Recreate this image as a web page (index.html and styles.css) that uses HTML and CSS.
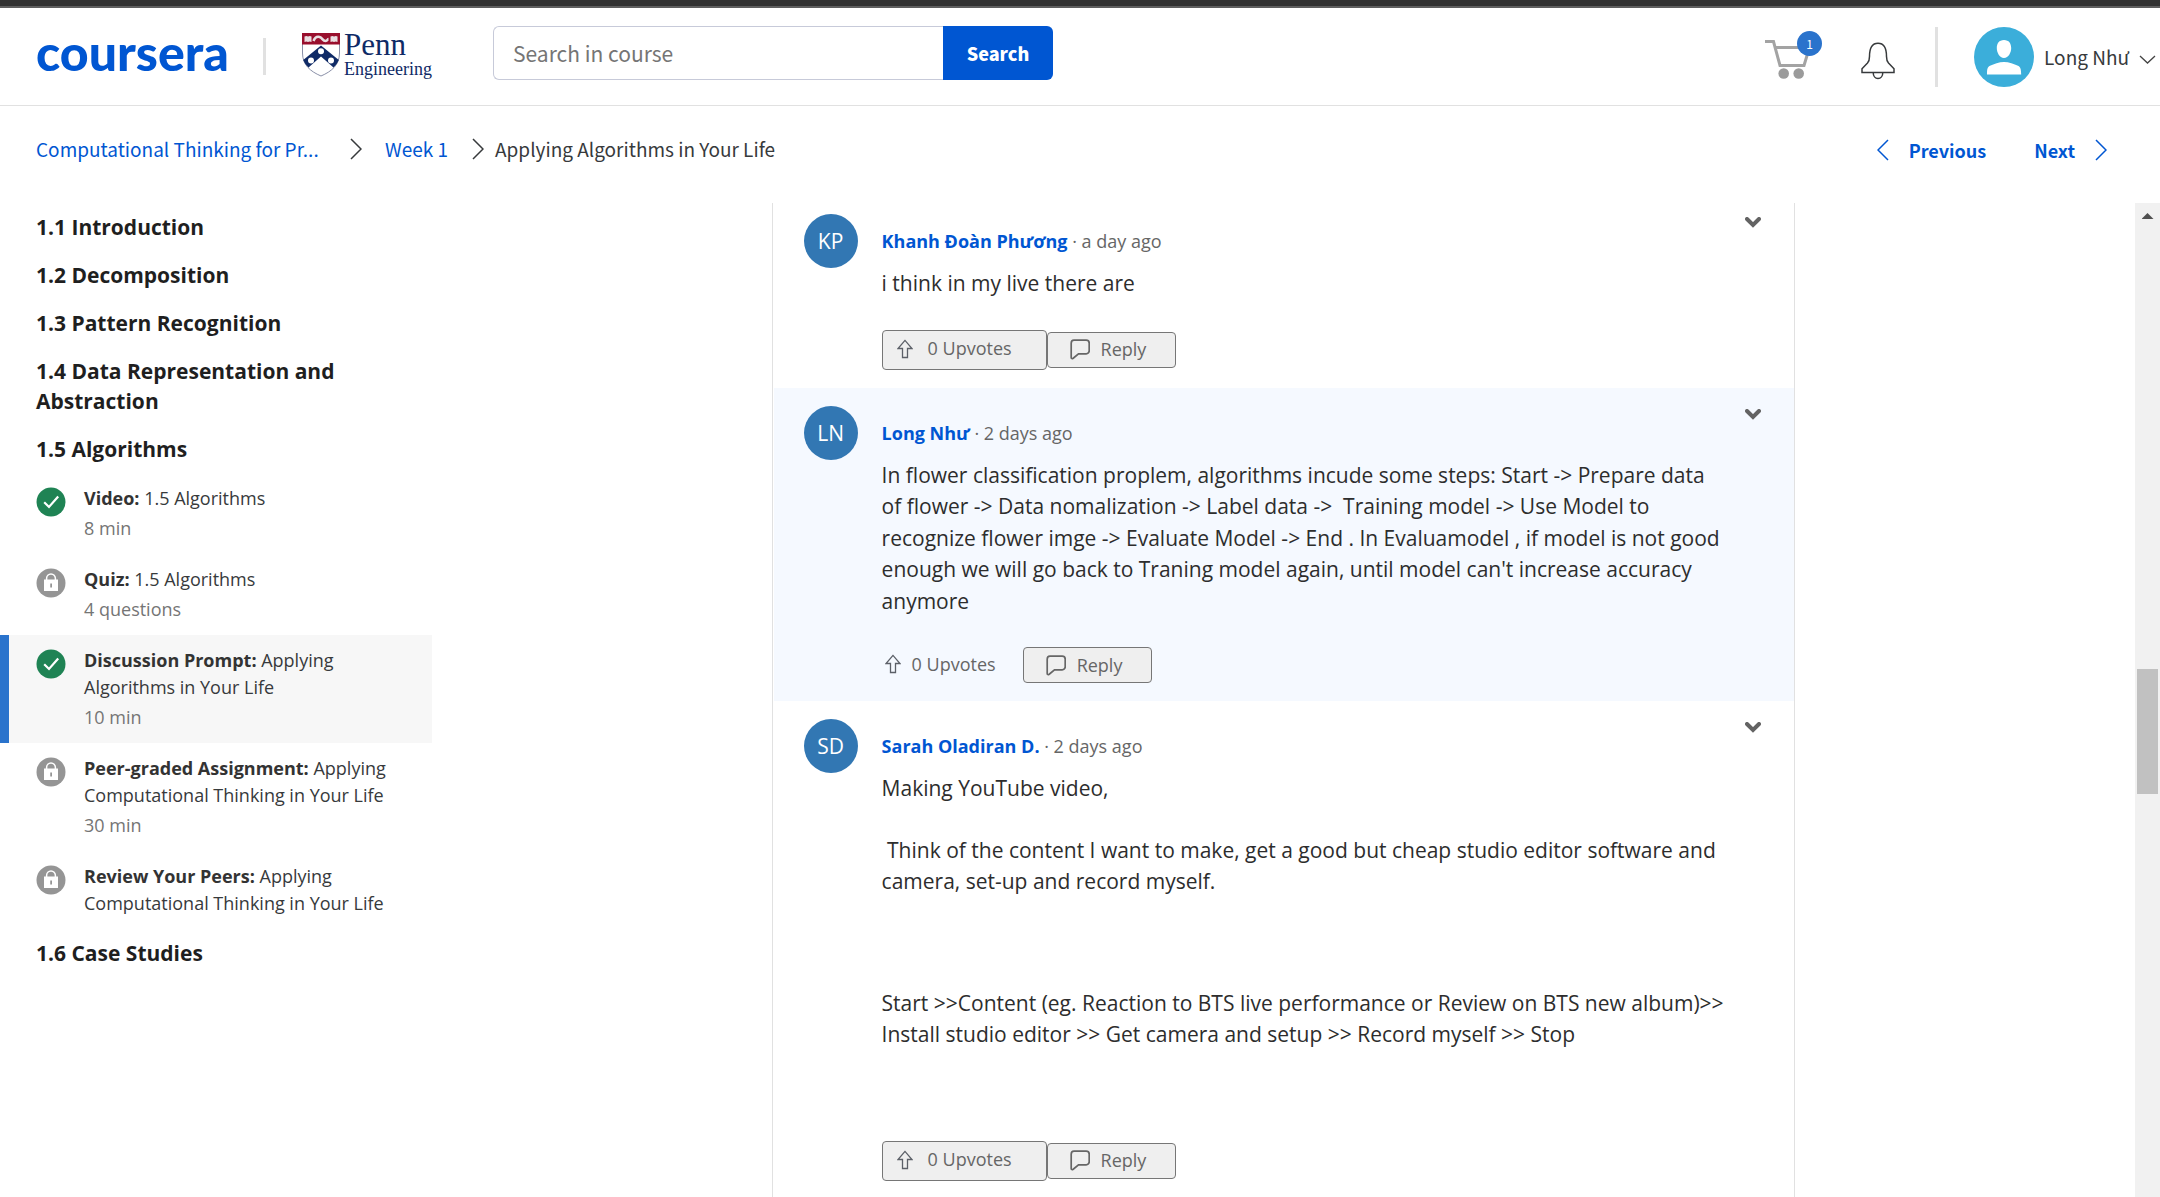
FILE: index.html
```html
<!DOCTYPE html>
<html lang="en">
<head>
<meta charset="utf-8">
<meta name="viewport" content="width=device-width, initial-scale=1">
<title>Applying Algorithms in Your Life | Coursera</title>
<link rel="stylesheet" href="styles.css">
</head>
<body>
<svg class="defs" aria-hidden="true">
  <symbol id="chevron" viewBox="0 0 12 22"><path d="M1 1l10 10L1 21" fill="none" stroke="currentColor" stroke-width="1.5"/></symbol>
  <symbol id="caret" viewBox="0 0 16 11"><path d="M2 2l6 6 6-6" fill="none" stroke="#636363" stroke-width="4" stroke-linejoin="miter" stroke-linecap="round"/></symbol>
  <symbol id="done" viewBox="0 0 30 30"><circle cx="15" cy="15" r="14.5" fill="#1f8354"/><path d="M8.2 15.2l4.8 4.8 9.2-10.4" fill="none" stroke="#fff" stroke-width="2.2"/></symbol>
  <symbol id="locked" viewBox="0 0 30 30"><circle cx="15" cy="15" r="14.5" fill="#959595"/><path d="M10.600 12.500V10.400a4.400 4.400 0 0 1 8.800 0v2.100" fill="none" stroke="#fff" stroke-width="1.500"/><path d="M8 11.500h14v11.500H8z" fill="#fff"/><path d="M14.300 15.500h1.600v4h-1.600z" fill="#8a8a8a"/></symbol>
  <symbol id="up" viewBox="0 0 16 20"><path d="M8 1.400L1 9.500h4.500v9h5v-9H15z" fill="none" stroke="#5c6068" stroke-width="1.300"/></symbol>
  <symbol id="bubble" viewBox="0 0 20 21"><path d="M4 1.200h12.200a3 3 0 0 1 3 3v7.600a3 3 0 0 1-3 3H8.500L3.200 19.200c-1 .7-2 .4-2-.8V4.200a3 3 0 0 1 2.800-3z" fill="none" stroke="#666" stroke-width="1.700"/></symbol>
</svg>

<div class="topstrip"></div>
<header class="header">
  <a class="logo" href="#">coursera</a>
  <span class="rule rule-short"></span>
  <a class="penn" href="#" aria-label="Penn Engineering">
    <svg class="shield" viewBox="0 0 38 44" aria-hidden="true">
      <path d="M.5.5h37V20c0 12-8 18.500-18.500 23C8.500 38.500.5 32 .5 20z" fill="#fff" stroke="#8a90a8"/>
      <path d="M0 0h38v11.500H0z" fill="#990f2d"/>
      <path d="M2.500 3.500q2-1 3.500 0 2-1 3.500 0v5.500q-2-.8-3.500 0-1.500-.8-3.500 0zM28.500 3.500q2-1 3.500 0 2-1 3.500 0v5.500q-2-.8-3.500 0-1.500-.8-3.500 0z" fill="#e9dfe2"/>
      <path d="M11.500 8q2-5 6-4c3 .7 3 4 6 4 2 0 2-2 3-2" fill="none" stroke="#e9dfe2" stroke-width="2.500"/>
      <path d="M19 12.500L36.800 27q-1.500 4-5.300 7.500L19 23.500 6.500 34.500Q2.700 31 1.200 27z" fill="#0f2a66"/>
      <circle cx="19" cy="18.300" r="3" fill="#fff"/><circle cx="9" cy="27.500" r="3" fill="#fff"/><circle cx="29" cy="27.500" r="3" fill="#fff"/>
    </svg>
    <span class="penn-words"><span class="penn-name">Penn</span><span class="penn-unit">Engineering</span></span>
  </a>
  <form class="search" role="search">
    <input class="search-box" type="text" placeholder="Search in course" aria-label="Search in course">
    <button class="search-go" type="button">Search</button>
  </form>
  <div class="account">
    <a class="cart" href="#" aria-label="Cart">
      <svg class="cart-icon" viewBox="0 0 44 42" aria-hidden="true"><path d="M0 3.500h8.500L15 27.500h24l5-16.500M10.500 9.500H36" fill="none" stroke="#a3a3a3" stroke-width="3"/><circle cx="18.700" cy="35.500" r="5.300" fill="#9b9b9b"/><circle cx="33.700" cy="35.500" r="5.300" fill="#9b9b9b"/></svg>
      <span class="badge">1</span>
    </a>
    <button class="bell" type="button" aria-label="Notifications">
      <svg class="bell-icon" viewBox="0 0 34 38" aria-hidden="true"><path d="M1 30.500v-3.800l5.500-5.700c1.800-2 2-3.600 2-6.600C8.500 6.500 11 1.200 17 1.200s8.500 5.300 8.500 13.200c0 3 .2 4.600 2 6.600l5.500 5.700v3.800zM12.200 30.500c0 3.500 2 6 4.800 6s4.800-2.500 4.800-6" fill="none" stroke="#373a3c" stroke-width="1.500"/></svg>
    </button>
    <span class="rule rule-tall"></span>
    <button class="profile" type="button">
      <svg class="portrait" viewBox="0 0 60 60" aria-hidden="true"><circle cx="30" cy="30" r="30" fill="#3baeda"/><path d="M30 13c5 0 7.200 3.600 7.200 8S34.500 31 30 31s-7.200-5.600-7.200-10S25 13 30 13zM13 47.500c0-5 .3-7.500 3-8.700 4-1.700 9-3.800 14-3.800s10 2.100 14 3.800c2.700 1.200 3 3.700 3.200 8.700z" fill="#fff"/></svg>
      <span class="profile-name">Long Như</span>
      <svg class="profile-caret" viewBox="0 0 17 9" aria-hidden="true"><path d="M1 1l7.500 7L16 1" fill="none" stroke="#444" stroke-width="1.300"/></svg>
    </button>
  </div>
</header>

<nav class="crumbs" aria-label="Breadcrumb">
  <a class="crumb-course" href="#">Computational Thinking for Pr...</a>
  <svg class="chev chev-wide"><use href="#chevron"/></svg>
  <a class="crumb-week" href="#">Week 1</a>
  <svg class="chev chev-last"><use href="#chevron"/></svg>
  <span>Applying Algorithms in Your Life</span>
  <span class="pager">
    <a class="page-link" href="#"><svg class="chev chev-back"><use href="#chevron"/></svg>Previous</a>
    <a class="page-link" href="#">Next<svg class="chev"><use href="#chevron"/></svg></a>
  </span>
</nav>

<div class="body">
  <nav class="outline" aria-label="Lessons">
    <a class="lesson" href="#">1.1 Introduction</a>
    <a class="lesson" href="#">1.2 Decomposition</a>
    <a class="lesson" href="#">1.3 Pattern Recognition</a>
    <a class="lesson" href="#">1.4 Data Representation and Abstraction</a>
    <a class="lesson" href="#">1.5 Algorithms</a>
    <a class="step" href="#"><svg class="state"><use href="#done"/></svg><span class="step-text"><span><b>Video:</b> 1.5 Algorithms</span><span class="length">8 min</span></span></a>
    <a class="step" href="#"><svg class="state"><use href="#locked"/></svg><span class="step-text"><span><b>Quiz:</b> 1.5 Algorithms</span><span class="length">4 questions</span></span></a>
    <a class="step current" href="#"><svg class="state"><use href="#done"/></svg><span class="step-text"><span><b>Discussion Prompt:</b> Applying Algorithms in Your Life</span><span class="length">10 min</span></span></a>
    <a class="step" href="#"><svg class="state"><use href="#locked"/></svg><span class="step-text"><span><b>Peer-graded Assignment:</b> Applying Computational Thinking in Your Life</span><span class="length">30 min</span></span></a>
    <a class="step" href="#"><svg class="state"><use href="#locked"/></svg><span class="step-text"><span><b>Review Your Peers:</b> Applying Computational Thinking in Your Life</span></span></a>
    <a class="lesson" href="#">1.6 Case Studies</a>
  </nav>

  <main class="main">
    <div class="thread">
      <article class="post">
        <span class="avatar">KP</span>
        <div class="content">
          <div class="byline"><a class="author" href="#">Khanh Đoàn Phương</a> · a day ago</div>
          <p>i think in my live there are</p>
          <div class="actions">
            <button class="vote" type="button"><svg class="up"><use href="#up"/></svg>0 Upvotes</button>
            <button class="reply" type="button"><svg class="bubble"><use href="#bubble"/></svg>Reply</button>
          </div>
        </div>
        <button class="more" type="button" aria-label="Post options"><svg class="caret"><use href="#caret"/></svg></button>
      </article>
      <article class="post own">
        <span class="avatar">LN</span>
        <div class="content">
          <div class="byline"><a class="author" href="#">Long Như</a> · 2 days ago</div>
          <p>In flower classification proplem, algorithms incude some steps: Start -&gt; Prepare data of flower -&gt; Data nomalization -&gt; Label data -&gt;&nbsp; Training model -&gt; Use Model to recognize flower imge -&gt; Evaluate Model -&gt; End . In Evaluamodel , if model is not good enough we will go back to Traning model again, until model can't increase accuracy anymore</p>
          <div class="actions">
            <span class="votes"><svg class="up"><use href="#up"/></svg>0 Upvotes</span>
            <button class="reply" type="button"><svg class="bubble"><use href="#bubble"/></svg>Reply</button>
          </div>
        </div>
        <button class="more" type="button" aria-label="Post options"><svg class="caret"><use href="#caret"/></svg></button>
      </article>
      <article class="post">
        <span class="avatar">SD</span>
        <div class="content">
          <div class="byline"><a class="author" href="#">Sarah Oladiran D.</a> · 2 days ago</div>
          <p>Making YouTube video,</p>
          <p class="blank"></p>
          <p>&nbsp;Think of the content I want to make, get a good but cheap studio editor software and camera, set-up and record myself.</p>
          <p class="blank"></p>
          <p class="blank"></p>
          <p class="blank"></p>
          <p>Start &gt;&gt;Content (eg. Reaction to BTS live performance or Review on BTS new album)&gt;&gt; Install studio editor &gt;&gt; Get camera and setup &gt;&gt; Record myself &gt;&gt; Stop</p>
          <p class="blank"></p>
          <p class="blank"></p>
          <div class="actions">
            <button class="vote" type="button"><svg class="up"><use href="#up"/></svg>0 Upvotes</button>
            <button class="reply" type="button"><svg class="bubble"><use href="#bubble"/></svg>Reply</button>
          </div>
        </div>
        <button class="more" type="button" aria-label="Post options"><svg class="caret"><use href="#caret"/></svg></button>
      </article>
    </div>
  </main>
  <div class="scrollbar" aria-hidden="true"><span class="arrow"></span><span class="thumb"></span></div>
</div>
</body>
</html>
```
FILE: styles.css
```css
* { box-sizing: border-box; }
body {
  margin: 0;
  height: 100vh;
  display: flex;
  flex-direction: column;
  overflow: hidden;
  background: #fff;
  color: #1f1f1f;
  font-family: "Open Sans", "Noto Sans", sans-serif;
  font-size: 18px;
}
a { color: inherit; text-decoration: none; }
button { font: inherit; color: inherit; padding: 0; border: 0; background: none; cursor: pointer; }
p { margin: 0; color: #2d2d2d; }
svg { flex: none; }
.defs { position: absolute; width: 0; height: 0; }

.topstrip { flex: none; height: 8px; background: #323232; border-bottom: 2px solid #5f5f5f; }

.header {
  flex: none;
  display: flex;
  align-items: center;
  height: 98px;
  padding: 0 4px 0 36px;
  border-bottom: 1px solid #e1e1e1;
  font-family: "Noto Sans CJK SC", "Open Sans", sans-serif;
}
.logo {
  width: 192px;
  padding-bottom: 10px;
  color: #0056d2;
  font: 900 50px/60px Lato, "Open Sans", sans-serif;
}
.rule { background: #e1e1e1; width: 3px; flex: none; }
.rule-short { height: 37px; margin: 0 36px 0 35px; }
.rule-tall { height: 60px; }
.penn { display: flex; gap: 4px; color: #0f2a66; font-family: "Liberation Serif", serif; }
.shield { width: 38px; height: 44px; }
.penn-words { display: flex; flex-direction: column; width: 90px; }
.penn-name { font-size: 31px; line-height: 24px; }
.penn-unit { font-size: 18px; line-height: 24px; }
.search { display: flex; width: 560px; height: 54px; margin: 0 0 8px 59px; }
.search-box {
  flex: 1;
  min-width: 0;
  padding: 0 19px;
  border: 1px solid #c7cad9;
  border-right: 0;
  border-radius: 6px 0 0 6px;
  font: 21px "Noto Sans CJK SC", sans-serif;
}
.search-box::placeholder { color: #757575; }
.search-go { width: 110px; border-radius: 0 6px 6px 0; background: #0056d2; color: #fff; font-weight: 900; }
.account { display: flex; align-items: center; margin-left: auto; color: #373a3c; }
.cart { position: relative; margin: 4px 52px 0 0; }
.cart-icon { display: block; width: 44px; height: 42px; }
.badge {
  position: absolute;
  top: -7px;
  left: 32px;
  width: 25px;
  height: 25px;
  border-radius: 50%;
  background: #2a73cc;
  color: #fff;
  font-size: 12px;
  line-height: 25px;
  text-align: center;
}
.bell { margin: 8px 40px 0 0; }
.bell-icon { display: block; width: 34px; height: 38px; }
.profile { display: flex; align-items: center; margin-left: 36px; font-size: 19px; }
.portrait { width: 60px; height: 60px; margin-right: 10px; }
.profile-caret { width: 17px; height: 9px; margin: 6px 0 0 10px; }

.crumbs {
  flex: none;
  display: flex;
  align-items: center;
  height: 97px;
  padding: 0 53px 12px 36px;
  font: 19px/30px "Noto Sans CJK SC", "Open Sans", sans-serif;
  color: #373a3c;
}
.crumb-course { width: 286px; overflow: hidden; white-space: nowrap; text-overflow: ellipsis; }
.crumb-course, .crumb-week, .pager { color: #0056d2; }
.chev { width: 12px; height: 22px; }
.chev-wide { margin: 0 23px 0 28px; }
.chev-last { margin: 0 11px 0 24px; }
.chev-back { transform: rotate(180deg); }
.pager { display: flex; gap: 48px; margin: 2px 0 0 auto; font-size: 18px; font-weight: 700; }
.page-link { display: flex; align-items: center; gap: 20px; }

.body { flex: 1; min-height: 0; display: flex; }
.outline { flex: none; width: 432px; overflow: hidden; }
.lesson { display: block; padding: 9px 60px 9px 36px; font-size: 21px; font-weight: 700; line-height: 30px; }
.step { display: flex; padding: 12px 36px 12px 27px; border-left: 9px solid transparent; color: #373a3c; line-height: 27px; }
.step b { font-weight: 700; color: #333; }
.current { background: #f7f7f7; border-left-color: #2a73cc; }
.state { width: 30px; height: 30px; margin: 2px 18px 0 0; }
.step-text { display: flex; flex-direction: column; gap: 3px; }
.length { color: #757575; }

.main { flex: 1; display: flex; justify-content: center; overflow: hidden; }
.thread { width: calc(60% + 2px); height: max-content; min-height: 100%; padding-left: 1px; border: solid #e1e1e1; border-width: 0 1px; }
.post { display: flex; align-items: flex-start; padding: 18px 33px 18px 30px; }
.post:first-child { padding-top: 11px; }
.own { background: #f5f9ff; }
.avatar {
  flex: none;
  width: 54px;
  margin-right: 24px;
  border-radius: 50%;
  background: #3277b3;
  color: #fff;
  font-size: 21px;
  line-height: 54px;
  text-align: center;
}
.content { flex: 1; padding-top: 12px; font-size: 21px; line-height: 1.5; }
.byline { margin-bottom: 12px; font-size: 18px; line-height: 30px; color: #666; }
.author { color: #0056d2; font-weight: 700; }
.blank { height: 30px; }
.actions { display: flex; align-items: center; margin-top: 30px; font-size: 18px; line-height: 27px; color: #666; }
.vote, .reply { display: flex; align-items: center; background: #efefef; border: 1px solid #767676; border-radius: 4px; }
.vote { width: 165px; height: 40px; padding: 0 14px 2px; gap: 15px; }
.reply { width: 129px; height: 36px; padding-left: 22px; gap: 11px; }
.votes { display: flex; align-items: center; gap: 11px; margin-right: 27px; padding: 0 0 2px 3px; }
.up { width: 16px; height: 20px; }
.bubble { width: 20px; height: 21px; }
.more { margin: 3px 0 0 17px; }
.caret { display: block; width: 16px; height: 11px; }

.scrollbar { flex: none; width: 25px; padding: 10px 2px 0; background: #f1f1f1; }
.arrow { display: block; width: 12px; height: 6px; margin: 0 auto; background: #505050; clip-path: polygon(50% 0, 100% 100%, 0 100%); }
.thumb { display: block; height: 125px; margin-top: 450px; background: #c1c1c1; }
```
